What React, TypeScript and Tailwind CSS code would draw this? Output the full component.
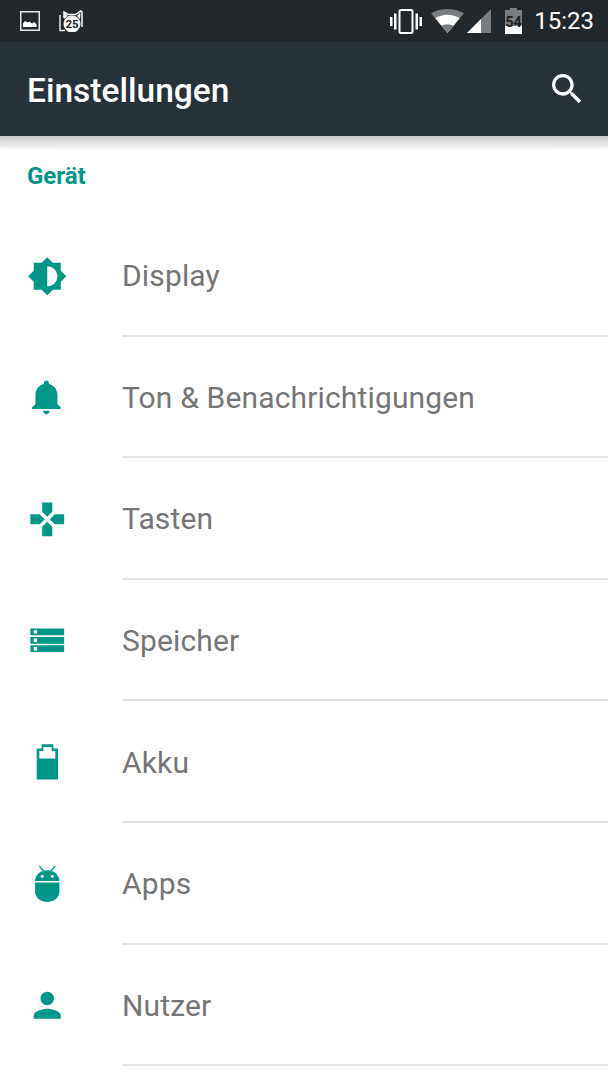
import React from "react";

const font = { fontFamily: "Roboto, sans-serif" };

const PictureIcon = () => (
  <svg width="20" height="20" viewBox="0 0 20 20" fill="none">
    <rect x="0.75" y="0.75" width="18.5" height="18.5" stroke="#e8e8e8" strokeWidth="1.5" />
    <path d="M3 16v-3.500l2-2.500 2.500 1.500 2-1 2.500 2 2-1.500 2.500 2V16z" fill="#fff" />
  </svg>
);

const CatIcon = () => (
  <svg width="25" height="22" viewBox="0 0 25 22" fill="none">
    <path d="M1 5v15.500h5" stroke="#e8e8e8" strokeWidth="1.500" />
    <path d="M5 8V2l4 2.500h7.500L21.500 1l1.500 1v15" stroke="#fff" strokeWidth="1.500" />
    <path d="M5 2l3.500 4-3 3zM21.500 2l-3.500 4 3 3z" fill="#fff" />
    <circle cx="13" cy="14" r="8.500" fill="#fff" />
    <text x="13" y="18" textAnchor="middle" fontSize="11.500" fontWeight="700" fill="#21272b" style={font}>25</text>
  </svg>
);

const VibrateIcon = () => (
  <svg width="32" height="25" viewBox="0 0 32 25" fill="none">
    <rect x="9.5" y="1" width="13" height="23" rx="1.5" stroke="#fff" strokeWidth="2" />
    <rect x="4" y="4.5" width="2.5" height="16" fill="#fff" />
    <rect x="25.5" y="4.5" width="2.5" height="16" fill="#fff" />
    <rect x="0" y="8" width="2.5" height="9" fill="#fff" />
    <rect x="29.5" y="8" width="2.5" height="9" fill="#fff" />
  </svg>
);

const WifiIcon = () => (
  <svg width="33" height="24" viewBox="0 0 33 24">
    <path d="M16.5 24L0 4.2C4.5 1.6 10.3 0 16.5 0S28.500 1.600 33 4.200z" fill="#7a7c7d" />
    <path d="M16.5 24L4.300 9.300C7.800 7.100 12 5.800 16.500 5.800s8.700 1.300 12.200 3.500z" fill="#fff" />
    <path d="M16.500 24l-6-7.200c1.700-.8 3.800-1.300 6-1.300s4.300.5 6 1.300z" fill="#7a7c7d" />
  </svg>
);

const SignalIcon = () => (
  <svg width="24" height="24" viewBox="0 0 24 24">
    <path d="M0 24L24 0v24z" fill="#7a7c7d" />
    <path d="M0 24L14 10v14z" fill="#fff" />
  </svg>
);

const BatteryIcon = () => (
  <svg width="17" height="26" viewBox="0 0 17 26">
    <path d="M5 0h7v2h5v24H0V2h5z" fill="#7a7c7d" />
    <rect x="0" y="18" width="17" height="8" fill="#fff" />
    <text x="8.500" y="18.500" textAnchor="middle" fontSize="14" fontWeight="700" fill="#1c2023" style={font}>54</text>
  </svg>
);

const SearchIcon = () => (
  <svg width="40" height="40" viewBox="0 0 24 24" fill="#fff">
    <path d="M15.500 14h-.79l-.28-.27C15.410 12.590 16 11.110 16 9.500 16 5.910 13.090 3 9.500 3S3 5.910 3 9.500 5.910 16 9.500 16c1.610 0 3.090-.59 4.230-1.570l.27.28v.79l5 4.990L20.490 19l-4.990-5zm-6 0C7.010 14 5 11.990 5 9.500S7.010 5 9.500 5 14 7.010 14 9.500 11.990 14 9.500 14z" />
  </svg>
);

const iconPaths: Record<string, string> = {
  display: "M20 15.310L23.310 12 20 8.690V4h-4.690L12 .69 8.690 4H4v4.690L.69 12 4 15.310V20h4.690L12 23.310 15.310 20H20v-4.690zM12 18V6c3.310 0 6 2.690 6 6s-2.690 6-6 6z",
  bell: "M11.500 22c1.100 0 2-.9 2-2h-4c0 1.100.9 2 2 2zm6.500-6v-5.500c0-3.070-2.130-5.640-5-6.320V3.500c0-.83-.67-1.500-1.500-1.500S10 2.670 10 3.500v.68c-2.870.68-5 3.250-5 6.320V16l-2 2v1h17v-1l-2-2z",
  gamepad: "M15 7.500V2H9v5.500l3 3 3-3zM7.500 9H2v6h5.500l3-3-3-3zM9 16.500V22h6v-5.500l-3-3-3 3zM16.500 9l-3 3 3 3H22V9h-5.500z",
  storage: "M2 5v4h20V5H2zm4 3H4V6h2v2zM2 10v4h20v-4H2zm4 3H4v-2h2v2zM2 15v4h20v-4H2zm4 3H4v-2h2v2z",
  battery: "M8.700 1.300h6.900v2.600h2.800v18.350H5.750V3.900H8.700zM9.660 2.900v2.400H7.300v4.500h9.500V5.300h-2.200V2.900z",
  android: "M7 1.500l.6-.5 2.700 2.900-.7.6zM17 1.500l-.6-.5-2.700 2.900.7.6zM4.800 10c0-3.500 3.200-6.300 7.200-6.300s7.200 2.800 7.200 6.300zM9 6.400a.9.9 0 100 1.800.9.9 0 000-1.800zM15 6.400a.9.9 0 100 1.800.9.9 0 000-1.800zM4.800 10.900h14.400v5.600c0 3.300-3.200 6-7.200 6s-7.200-2.700-7.200-6z",
  person: "M12 12c2.210 0 4-1.790 4-4s-1.790-4-4-4-4 1.790-4 4 1.790 4 4 4zm0 2c-2.670 0-8 1.340-8 4v2h16v-2c0-2.660-5.330-4-8-4z",
};

const items = [
  { label: "Display", icon: "display" },
  { label: "Ton & Benachrichtigungen", icon: "bell" },
  { label: "Tasten", icon: "gamepad" },
  { label: "Speicher", icon: "storage" },
  { label: "Akku", icon: "battery" },
  { label: "Apps", icon: "android" },
  { label: "Nutzer", icon: "person" },
];

const SettingsRow = ({ label, icon }: { label: string; icon: string }) => (
  <div className="flex h-[121.6px] shrink-0">
    <div className="flex w-[122px] shrink-0 items-center pl-[27px]">
      <svg width="40.500" height="40.500" viewBox="0 0 24 24" fill="#009688" fillRule="evenodd">
        <path d={iconPaths[icon]} />
      </svg>
    </div>
    <div className="flex flex-1 items-center border-b-[2px] border-[#e3e3e3] pt-[2px] text-[30px] tracking-[0.15px] text-[#757575]">
      {label}
    </div>
  </div>
);

export default function App() {
  return (
    <div className="h-[1080px] w-[608px] overflow-hidden bg-white" style={font}>
      {/* Status bar */}
      <div className="flex h-[42px] items-center bg-[#21272b] pl-[20px] pr-[14px]">
        <PictureIcon />
        <div className="ml-[19px]">
          <CatIcon />
        </div>
        <div className="ml-auto flex items-center">
          <VibrateIcon />
          <div className="ml-[9px]"><WifiIcon /></div>
          <div className="ml-[3px]"><SignalIcon /></div>
          <div className="ml-[14px]"><BatteryIcon /></div>
          <span className="ml-[12px] text-[24px] font-normal text-white">15:23</span>
        </div>
      </div>

      {/* App bar */}
      <div className="relative flex h-[94px] items-center justify-between bg-[#263238] pl-[27px] pr-[21px]">
        <span className="pt-[4px] text-[33.500px] font-medium text-white">Einstellungen</span>
        <SearchIcon />
        <div className="absolute left-0 top-full h-[15px] w-full rounded-b-[50%_20%] bg-gradient-to-b from-[#c8caca] to-white" />
      </div>

      {/* Section header */}
      <div className="flex h-[79px] items-center pl-[27px] text-[24px] font-bold text-[#009688]">
        Gerät
      </div>

      <div className="flex flex-col">
        {items.map((item) => (
          <SettingsRow key={item.label} label={item.label} icon={item.icon} />
        ))}
      </div>
    </div>
  );
}
